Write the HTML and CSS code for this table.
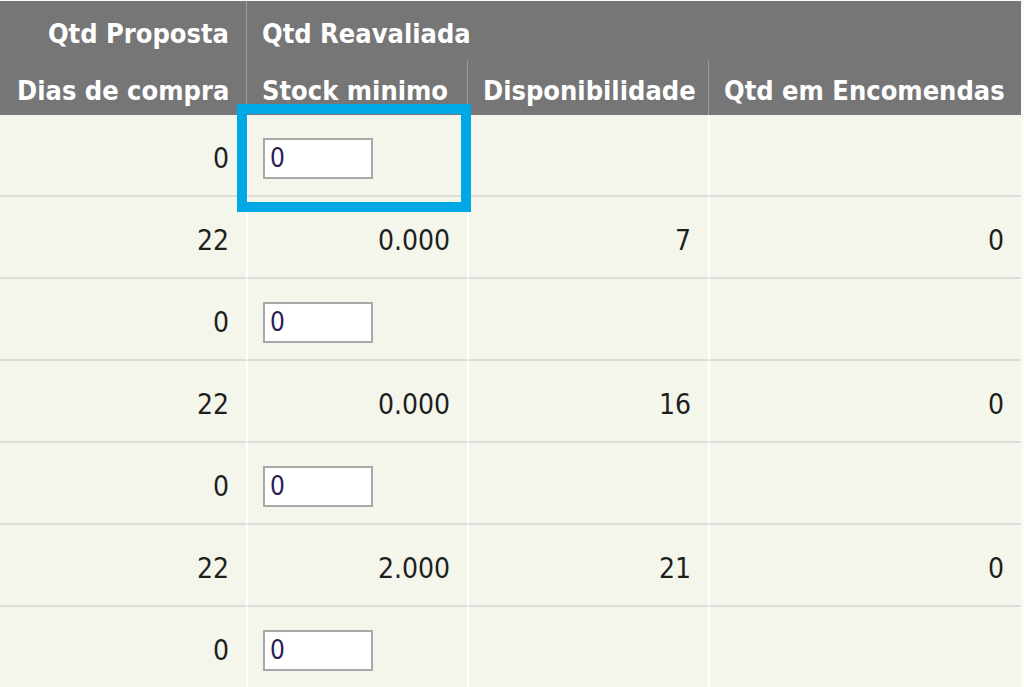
FILE: index.html
```html
<!DOCTYPE html>
<html>
<head>
<meta charset="utf-8">
<link rel="stylesheet" href="styles.css">
</head>
<body>
<div class="wrap">
<table class="grid">
  <colgroup>
    <col class="c1"><col class="c2"><col class="c3"><col class="c4">
  </colgroup>
  <thead>
    <tr class="h1">
      <th class="r">Qtd Proposta</th>
      <th class="l sep" colspan="3">Qtd Reavaliada</th>
    </tr>
    <tr class="h2">
      <th class="r">Dias de compra</th>
      <th class="l sep">Stock minimo</th>
      <th class="l sep">Disponibilidade</th>
      <th class="l sep">Qtd em Encomendas</th>
    </tr>
  </thead>
  <tbody>
    <tr><td>0</td><td class="l"><input class="qty" type="text" value="0"></td><td></td><td></td></tr>
    <tr><td>22</td><td>0.000</td><td>7</td><td>0</td></tr>
    <tr><td>0</td><td class="l"><input class="qty" type="text" value="0"></td><td></td><td></td></tr>
    <tr><td>22</td><td>0.000</td><td>16</td><td>0</td></tr>
    <tr><td>0</td><td class="l"><input class="qty" type="text" value="0"></td><td></td><td></td></tr>
    <tr><td>22</td><td>2.000</td><td>21</td><td>0</td></tr>
    <tr><td>0</td><td class="l"><input class="qty" type="text" value="0"></td><td></td><td></td></tr>
  </tbody>
</table>
<div class="highlight"></div>
</div>
</body>
</html>
```

FILE: styles.css
```css
html, body {
  margin: 0;
  padding: 0;
  background: #fafaf6;
}
.wrap {
  position: relative;
  width: 1024px;
  height: 687px;
  overflow: hidden;
}
.grid {
  border-collapse: separate;
  border-spacing: 0;
  table-layout: fixed;
  width: 1021px;
  margin-top: 1px;
  font-family: "DejaVu Sans Condensed", "DejaVu Sans", sans-serif;
}
.c1 { width: 246px; }
.c2 { width: 221px; }
.c3 { width: 241px; }
.c4 { width: 313px; }
.grid th {
  background: #767676;
  color: #ffffff;
  font-weight: bold;
  font-size: 27px;
  letter-spacing: 0;
  padding: 5px 16px 0 17px;
  white-space: nowrap;
  vertical-align: middle;
}
.h1 th { height: 54px; }
.h2 th { height: 50px; }
.grid th.sep { border-left: 1px solid #9b9b9b; }
.grid th.r { text-align: right; padding-right: 17px; }
.grid th.l { text-align: left; padding-left: 15px; }
.grid td {
  background: #f5f6eb;
  color: #1e1e1e;
  font-size: 28px;
  height: 74px;
  padding: 6px 17px 0 15px;
  text-align: right;
  vertical-align: middle;
  border-bottom: 2px solid #dcdcdc;
  border-left: 2px solid #ffffff;
}
.grid td:first-child { border-left: 0; }
.grid td.l { text-align: left; }
.qty {
  box-sizing: border-box;
  width: 110px;
  height: 41px;
  margin: 0;
  padding: 0 5px;
  border: 2px solid #a8a8a8;
  background: #ffffff;
  color: #2a1f55;
  font-family: "DejaVu Sans Condensed", "DejaVu Sans", sans-serif;
  font-size: 26px;
  display: block;
}
.highlight {
  position: absolute;
  left: 237px;
  top: 104px;
  width: 234px;
  height: 108px;
  box-sizing: border-box;
  border: 10px solid #00a8e6;
}
```
